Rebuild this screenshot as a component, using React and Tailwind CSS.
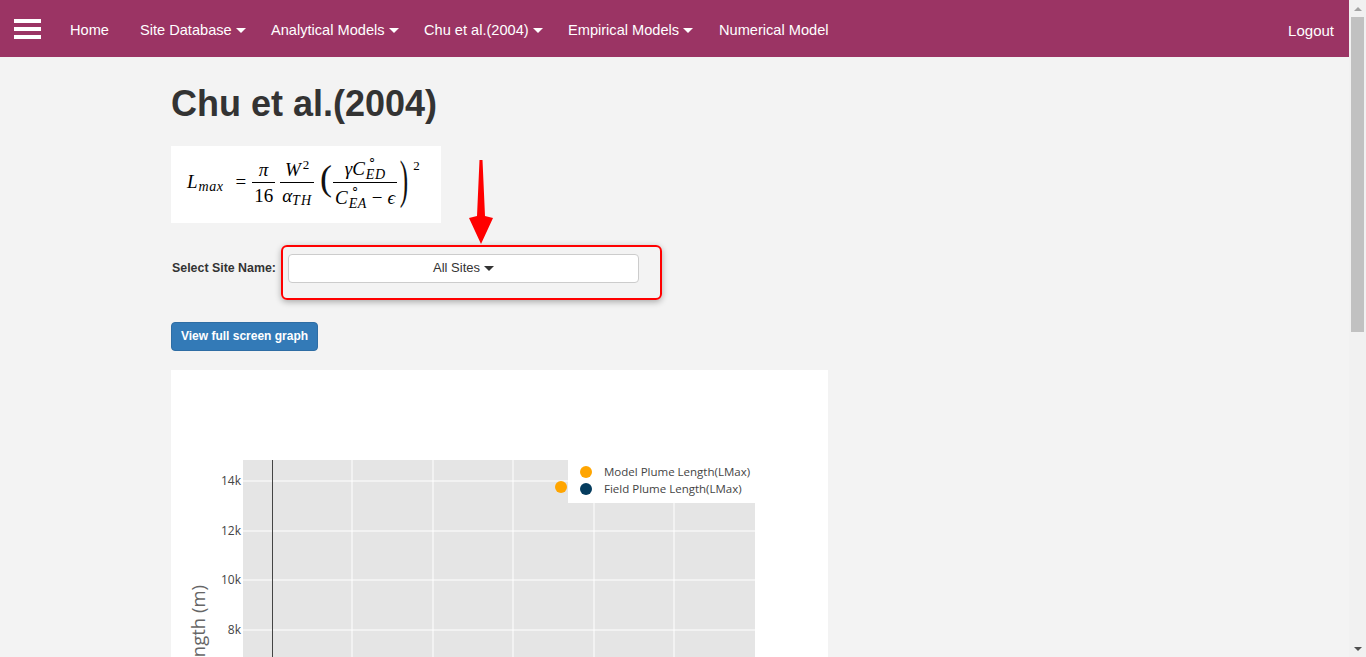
import React from 'react';

const navItems = [
  { label: 'Home', w: 'w-[70px]' },
  { label: 'Site Database', caret: true, w: 'w-[131px]' },
  { label: 'Analytical Models', caret: true, w: 'w-[153px]' },
  { label: 'Chu et al.(2004)', caret: true, w: 'w-[144px]' },
  { label: 'Empirical Models', caret: true, w: 'w-[151px]' },
  { label: 'Numerical Model', w: 'w-auto' },
];

function Caret({ color = 'border-t-white' }) {
  return (
    <span className={`inline-block w-0 h-0 ml-[4px] align-middle border-t-[5px] border-x-[5px] border-x-transparent ${color}`} />
  );
}

function Navbar() {
  return (
    <nav className="h-[57px] bg-[#9b3464] flex items-center text-white text-[14.6px]">
      {/* hamburger */}
      <div className="ml-[14px] flex flex-col gap-[4px]">
        <span className="block w-[27px] h-[4px] bg-white" />
        <span className="block w-[27px] h-[4px] bg-white" />
        <span className="block w-[27px] h-[4px] bg-white" />
      </div>
      <ul className="flex ml-[29px] pt-[5px]">
        {navItems.map((item) => (
          <li key={item.label} className={`${item.w} flex items-center whitespace-nowrap`}>
            {item.label}
            {item.caret && <Caret />}
          </li>
        ))}
      </ul>
      <span className="ml-auto mr-[15px] pt-[5px] text-[15px]">Logout</span>
    </nav>
  );
}

function Frac({ num, den, className = '' }) {
  return (
    <span className={`inline-flex flex-col items-center ${className}`}>
      <span className="leading-none pb-[3px] px-[2px] flex items-end">{num}</span>
      <span className="h-px w-full bg-black" />
      <span className="leading-none pt-[3px] px-[2px] flex items-start">{den}</span>
    </span>
  );
}

function CScript({ sub }) {
  return (
    <span className="inline-flex items-center">
      <span className="italic">C</span>
      <span className="inline-flex flex-col text-[14px] leading-[1] ml-[1px]">
        <span className="not-italic text-[13px] leading-[1] h-[8px] ml-[2px] relative -top-[5px]">∘</span>
        <span className="italic tracking-[0.5px] relative top-[3px]">{sub}</span>
      </span>
    </span>
  );
}

function Paren({ children }) {
  return (
    <span className="relative -top-[3px] text-[36px] leading-none scale-y-[1.45] scale-x-[0.7] text-[#111]">{children}</span>
  );
}

function Equation() {
  return (
    <div className="w-[270px] h-[77px] bg-white flex items-center pl-[16px] pb-[3px] text-[19px] text-black font-['Liberation_Serif',serif]">
      <span className="flex items-center">
        <span className="italic">L</span>
        <span className="italic text-[14px] relative top-[4px] ml-[1px] tracking-[0.5px]">max</span>
      </span>
      <span className="ml-[12px] mr-[6px]">=</span>
      <Frac num={<span className="italic">π</span>} den="16" />
      <Frac
        className="ml-[5px]"
        num={<span className="italic">W<sup className="not-italic text-[13px] -top-[7px] ml-[2px]">2</sup></span>}
        den={<span className="italic">α<span className="text-[14px] relative top-[3px] tracking-[1px]">TH</span></span>}
      />
      <span className="ml-[6px]"><Paren>(</Paren></span>
      <Frac
        className="mx-[1px]"
        num={<span className="flex items-center"><span className="italic">γ</span><CScript sub="ED" /></span>}
        den={<span className="flex items-center"><CScript sub="EA" /><span className="mx-[5px]">−</span><span className="italic">ϵ</span></span>}
      />
      <Paren>)</Paren>
      <span className="text-[13px] self-start mt-[10px] ml-[3px]">2</span>
    </div>
  );
}

function Chart() {
  const vLines = [181, 262, 342, 423, 503];
  const hLines = [
    { y: 111, label: '14k' },
    { y: 161, label: '12k' },
    { y: 210, label: '10k' },
    { y: 260, label: '8k' },
    { y: 310, label: '6k' },
    { y: 359, label: '4k' },
  ];
  return (
    <div className="w-[657px] h-[450px] bg-white">
      <svg width="657" height="450" fontFamily="'Open Sans', verdana, arial, sans-serif">
        <rect x="72" y="90" width="512" height="320" fill="#e5e5e5" />
        {vLines.map((x) => (
          <line key={x} x1={x} y1="90" x2={x} y2="410" stroke="#fff" strokeWidth="1" />
        ))}
        {hLines.map((h) => (
          <g key={h.y}>
            <line x1="72" y1={h.y} x2="584" y2={h.y} stroke="#fff" strokeWidth="1" />
            <text x="70" y={h.y + 4} fontSize="12" fill="#444" textAnchor="end">{h.label}</text>
          </g>
        ))}
        <line x1="101.5" y1="90" x2="101.5" y2="410" stroke="#444" strokeWidth="1" />
        <circle cx="390" cy="117" r="6" fill="#ffa500" />
        {/* legend */}
        <rect x="397" y="90" width="188" height="43" fill="#fff" />
        <circle cx="415" cy="102" r="6" fill="#ffa500" />
        <circle cx="415" cy="119" r="6" fill="#053c5e" />
        <text x="433" y="106" fontSize="11.5" fill="#444">Model Plume Length(LMax)</text>
        <text x="433" y="123" fontSize="11.5" fill="#444">Field Plume Length(LMax)</text>
        <text transform="translate(34,215) rotate(-90)" textAnchor="end" fontSize="18.5" fill="#666">Plume Length (m)</text>
      </svg>
    </div>
  );
}

function Scrollbar() {
  return (
    <div className="w-[17px] h-full bg-[#f1f1f1] flex flex-col items-center">
      <div className="h-[17px] flex items-center justify-center">
        <span className="w-0 h-0 border-b-[4px] border-x-[4px] border-x-transparent border-b-[#a3a3a3]" />
      </div>
      <div className="w-[13px] h-[315px] bg-[#c1c1c1]" />
      <div className="mt-auto h-[17px] flex items-center justify-center">
        <span className="w-0 h-0 border-t-[4px] border-x-[4px] border-x-transparent border-t-[#505050]" />
      </div>
    </div>
  );
}

export default function App() {
  return (
    <div className="flex h-screen w-full overflow-hidden bg-[#f3f3f3] font-['Liberation_Sans',Arial,sans-serif]">
      <div className="flex-1 min-w-0 overflow-hidden">
        <Navbar />
        <main className="pl-[171px]">
          <h1 className="mt-[27px] text-[36px] font-bold leading-[1.1] text-[#333]">Chu et al.(2004)</h1>
          <div className="mt-[22px]">
            <Equation />
          </div>

          <div className="relative mt-[31px] flex items-center">
            <label className="text-[12.4px] font-bold text-[#333] pl-[1px]">Select Site Name:</label>
            <button className="ml-[12px] w-[351px] h-[29px] bg-white border border-[#ccc] rounded-[4px] text-[13px] text-[#333] flex items-center justify-center">
              All Sites
              <Caret color="border-t-[#333]" />
            </button>
            {/* red annotation */}
            <div className="absolute left-[110px] -top-[9px] w-[381px] h-[55px] border-2 border-[#ff0000] rounded-[6px] shadow-[0_2px_6px_rgba(0,0,0,0.3)] pointer-events-none" />
            <svg className="absolute left-[298px] -top-[96px]" width="24" height="88" viewBox="0 0 24 88">
              <path d="M10.5 2 L13.5 2 L16 58 L24 60 L12 86 L0 60 L8 58 Z" fill="#ff0000" />
            </svg>
          </div>

          <button className="mt-[39px] w-[147px] h-[29px] bg-[#337ab7] border border-[#2e6da4] rounded-[4px] text-white text-[12px] font-bold">
            View full screen graph
          </button>

          <div className="mt-[19px]">
            <Chart />
          </div>
        </main>
      </div>
      <Scrollbar />
    </div>
  );
}
